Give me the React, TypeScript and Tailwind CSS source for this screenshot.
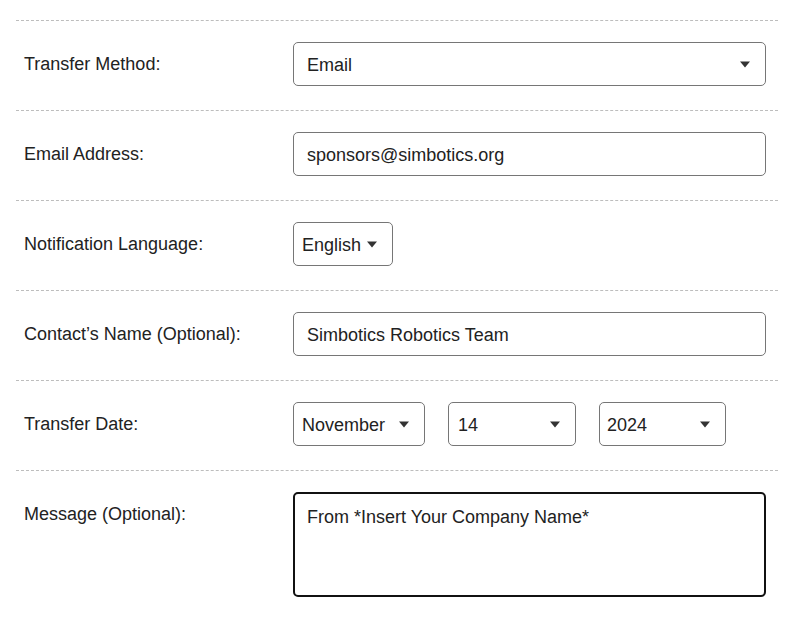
import React from "react";

const font = { fontFamily: '"Liberation Sans", Arial, sans-serif' };

function Caret() {
  return (
    <svg width="10" height="7" viewBox="0 0 10 7" className="shrink-0">
      <path d="M0 0.5 H10 L5 6.5 Z" fill="#333333" />
    </svg>
  );
}

function SelectBox({ value, className, padLeft }: { value: string; className: string; padLeft: string }) {
  return (
    <div
      className={`h-[44px] flex items-center justify-between border border-[#767676] rounded-[5px] bg-white text-[18px] text-[#222] pr-[15px] ${padLeft} ${className}`}
    >
      <span className="leading-[24px] pt-[1px]">{value}</span>
      <Caret />
    </div>
  );
}

function Row({ label, children, last }: { label: string; children: React.ReactNode; last?: boolean }) {
  return (
    <div className={`grid grid-cols-[269px_1fr] border-t border-dashed border-[#bdbdbd] pl-2 pr-3 pt-[21px] ${last ? "pb-[20px]" : "pb-[24px]"}`}>
      <div className="mt-[10px] text-[18px] leading-[24px] text-[#222]">{label}</div>
      <div>{children}</div>
    </div>
  );
}

function TextBox({ value }: { value: string }) {
  return (
    <div className="h-[44px] flex items-center border border-[#767676] rounded-[5px] pl-[13px] text-[18px] text-[#222]">
      <span className="leading-[24px] pt-[1px]">{value}</span>
    </div>
  );
}

export default function App() {
  return (
    <div className="w-[786px] h-[617px] bg-white pl-4 pr-2 pt-[20px] overflow-hidden" style={font}>
      <Row label="Transfer Method:">
        <SelectBox value="Email" className="w-full" padLeft="pl-[13px]" />
      </Row>
      <Row label="Email Address:">
        <TextBox value="sponsors@simbotics.org" />
      </Row>
      <Row label="Notification Language:">
        <SelectBox value="English" className="w-[100px]" padLeft="pl-[8px]" />
      </Row>
      <Row label="Contact’s Name (Optional):">
        <TextBox value="Simbotics Robotics Team" />
      </Row>
      <Row label="Transfer Date:">
        <div className="flex gap-[23px]">
          <SelectBox value="November" className="w-[132px]" padLeft="pl-[8px]" />
          <SelectBox value="14" className="w-[128px]" padLeft="pl-[9px]" />
          <SelectBox value="2024" className="w-[127px]" padLeft="pl-[7px]" />
        </div>
      </Row>
      <Row label="Message (Optional):" last>
        <div className="h-[105px] border-2 border-[#111] rounded-[5px] pl-[12px] pt-[11px] text-[18px] leading-[24px] text-[#222]">
          From *Insert Your Company Name*
        </div>
      </Row>
    </div>
  );
}
